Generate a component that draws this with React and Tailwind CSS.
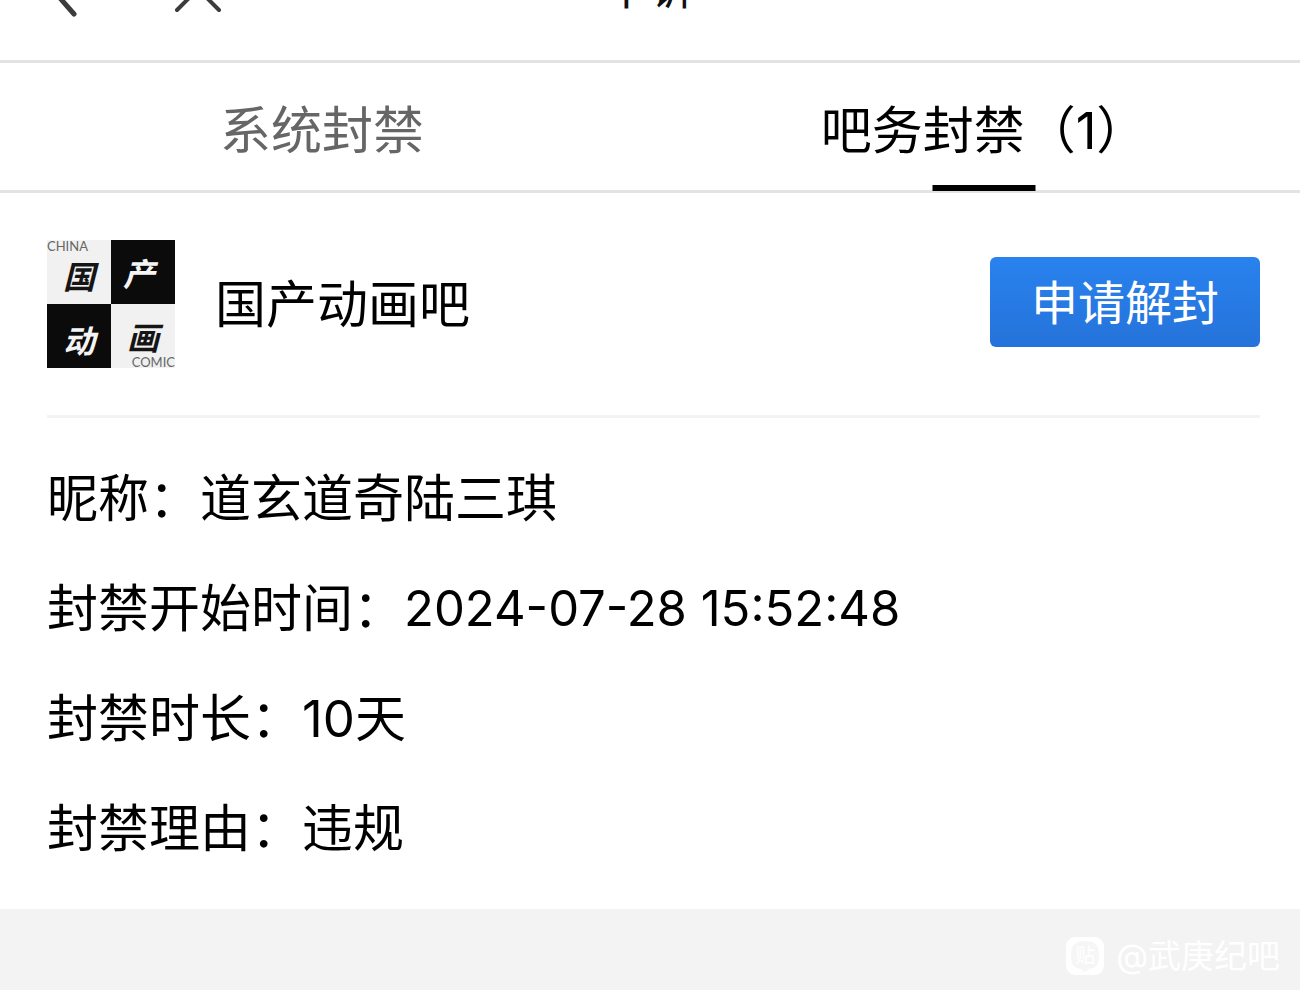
import React from 'react';

const tabs = [
  { label: '系统封禁', active: false },
  { label: '吧务封禁（1）', active: true },
];

const details = [
  { label: '昵称', value: '道玄道奇陆三琪' },
  { label: '封禁开始时间', value: '2024-07-28 15:52:48', numeric: true },
  { label: '封禁时长', value: '10天' },
  { label: '封禁理由', value: '违规' },
];

const BackIcon = () => (
  <svg className="w-12 h-16" viewBox="0 0 48 64" fill="none" stroke="#3c3c3c" strokeWidth="5" strokeLinecap="round">
    <path d="M34 7 L12 32 L34 57" />
  </svg>
);

const CloseIcon = () => (
  <svg className="w-12 h-12" viewBox="0 0 48 48" fill="none" stroke="#3c3c3c" strokeWidth="4" strokeLinecap="round">
    <path d="M3 3 L45 45 M45 3 L3 45" />
  </svg>
);

const ForumLogo = () => (
  <div className="relative grid grid-cols-2 size-32 shrink-0 font-['Noto_Sans_CJK_SC',sans-serif] text-[32px] leading-none font-bold italic">
    <span className="flex items-center justify-center bg-[#f1f1f1] text-[#151515] pt-1.5">国</span>
    <span className="flex items-center justify-center bg-[#0b0b0b] text-[#f4f4f4] pr-2">产</span>
    <span className="flex items-center justify-center bg-[#0b0b0b] text-[#f4f4f4] pt-1.5">动</span>
    <span className="flex items-center justify-center bg-[#f1f1f1] text-[#151515]">画</span>
    <span className="absolute left-0 top-0 font-[Lato,sans-serif] text-[13px] leading-3 font-normal not-italic text-[#666]">CHINA</span>
    <span className="absolute right-0 bottom-0 font-[Lato,sans-serif] text-[13px] leading-3 font-normal not-italic text-[#666]">COMIC</span>
  </div>
);

const TiebaIcon = () => (
  <span className="relative flex items-center justify-center size-[38px] text-white">
    <svg className="absolute inset-0" viewBox="0 0 38 38">
      <rect width="38" height="38" rx="9" fill="#ffffff" />
      <path d="M19 4 C29 4 33 8 33 18 C33 28 30 31 23 32 L19 35 L15 32 C8 31 5 28 5 18 C5 8 9 4 19 4Z" fill="#f6f6f6" />
    </svg>
    <span className="relative text-[20px] leading-none">贴</span>
  </span>
);

const App = () => {
  return (
    <div className="min-h-screen flex flex-col bg-[#f3f3f3] text-black font-[Inter,'Noto_Sans_CJK_SC',sans-serif]">
      {/* Title bar, scrolled partly out of view */}
      <header className="h-[63px] shrink-0 flex items-end overflow-hidden bg-white border-b-[3px] border-[#e3e3e3]">
        <div className="w-full h-[142px] shrink-0 grid grid-cols-[1fr_auto_1fr] items-center">
          <div className="flex items-center gap-[86px] pl-10">
            <button type="button" aria-label="返回"><BackIcon /></button>
            <button type="button" aria-label="关闭"><CloseIcon /></button>
          </div>
          <h1 className="pb-1.5 text-[47px] leading-none text-[#111]">申诉</h1>
        </div>
      </header>

      {/* Tabs */}
      <nav className="grid grid-cols-2 gap-x-[30px] pl-1.5 h-[130px] shrink-0 bg-white border-b-[3px] border-[#e3e3e3]">
        {tabs.map((tab) => (
          <button
            key={tab.label}
            type="button"
            className={`relative flex items-center justify-center pt-2 text-[51px] leading-none whitespace-nowrap ${tab.active ? 'text-black' : 'text-[#666]'}`}
          >
            {tab.label}
            {tab.active && <span className="absolute -bottom-px left-1/2 -translate-x-1/2 w-[103px] h-1.5 bg-black" />}
          </button>
        ))}
      </nav>

      {/* Ban card */}
      <main className="bg-white pl-[47px] pr-10 pb-[26px]">
        <div className="flex items-center h-[225px] border-b-[3px] border-[#f3f3f3]">
          <ForumLogo />
          <h2 className="ml-10 text-[51px] leading-none">国产动画吧</h2>
          <button
            type="button"
            className="ml-auto mb-1 w-[270px] h-[90px] rounded-md bg-linear-to-b from-[#2982ee] to-[#2573da] text-white text-[47px] leading-none"
          >
            申请解封
          </button>
        </div>
        <dl className="pt-[25px]">
          {details.map((item) => (
            <div key={item.label} className="flex items-center h-[110px] text-[51px] leading-none whitespace-nowrap">
              <dt>{item.label}：</dt>
              <dd className={item.numeric ? 'text-[49px]' : ''}>{item.value}</dd>
            </div>
          ))}
        </dl>
      </main>

      <footer className="flex items-center justify-end gap-3 pr-5 pt-7 text-white text-[33px] leading-none">
        <TiebaIcon />
        <span>@武庚纪吧</span>
      </footer>
    </div>
  );
};

export default App;
